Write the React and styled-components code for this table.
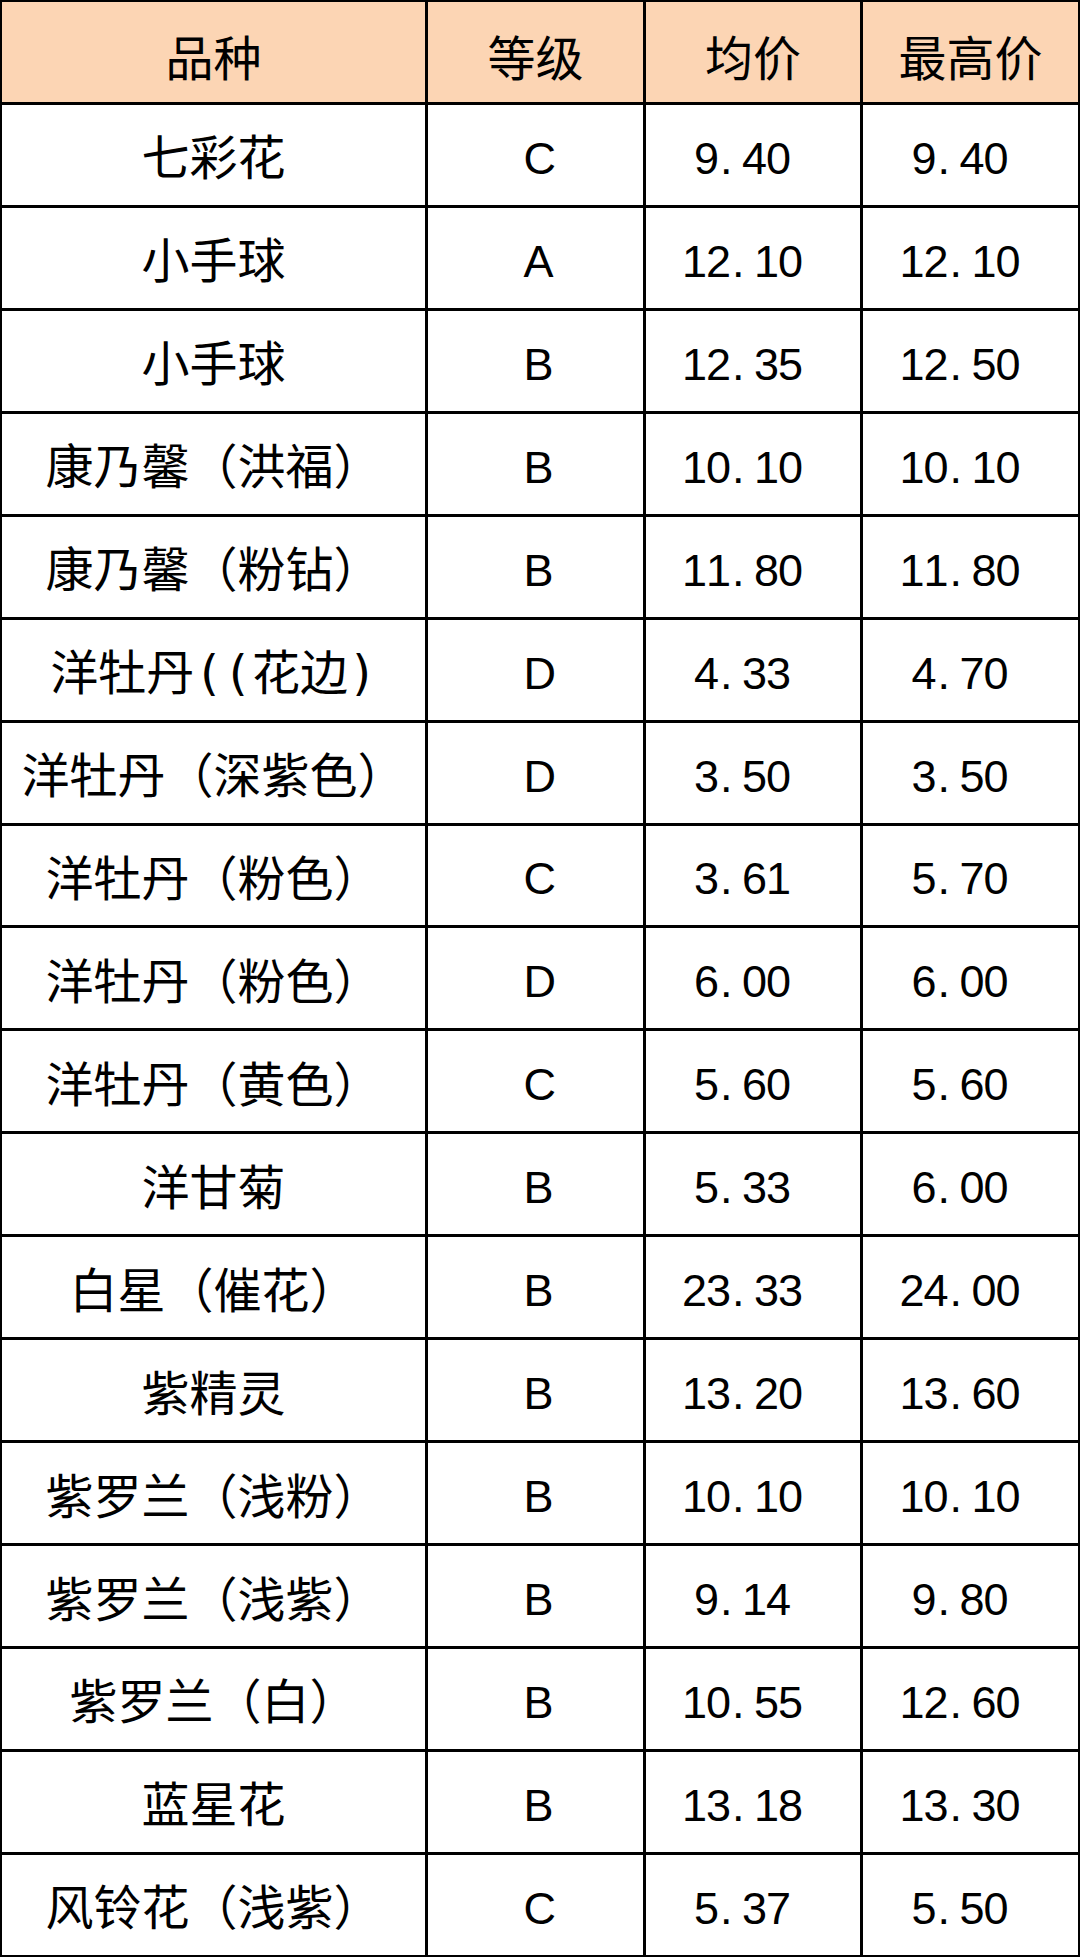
import React from "react";
import styled, { createGlobalStyle } from "styled-components";

const GlobalStyle = createGlobalStyle`
  html, body {
    margin: 0;
    padding: 0;
    background: #ffffff;
  }
  body {
    font-family: "Noto Sans CJK SC", sans-serif;
  }
`;

const Table = styled.div`
  display: grid;
  grid-template-columns: 423px 215px 214px 215px;
  grid-auto-rows: 99.95px;
  gap: 3px;
  padding: 2px;
  width: 1080px;
  box-sizing: border-box;
  background: #000000;
`;

const Cell = styled.div`
  display: flex;
  align-items: center;
  justify-content: center;
  padding-top: 7px;
  box-sizing: border-box;
  background: ${(p) => (p.$head ? "#FCD5B4" : "#ffffff")};
  color: #000000;
  white-space: nowrap;
  overflow: hidden;
`;

const NameText = styled.span`
  font-family: "DejaVu Sans Mono", "Noto Sans CJK SC", sans-serif;
  font-size: 48px;
  line-height: 1;
`;

const HeadText = styled.span`
  font-family: "Noto Sans CJK SC", sans-serif;
  font-size: 48px;
  line-height: 1;
`;

const ValueText = styled.span`
  display: inline-flex;
  padding-right: ${(p) => (p.$trail ? "22px" : "0")};
  font-family: "Liberation Sans", Arial, sans-serif;
  font-size: 45px;
  line-height: 1;
`;

const Glyph = styled.span`
  display: inline-block;
  width: 24px;
  text-align: ${(p) => (p.$dot ? "left" : "center")};
  padding-left: ${(p) => (p.$dot ? "2px" : "0")};
  box-sizing: border-box;
`;

const Value = ({ children, trail }) => (
  <ValueText $trail={trail}>
    {String(children)
      .split("")
      .map((ch, i) => (
        <Glyph key={i} $dot={ch === "."}>
          {ch}
        </Glyph>
      ))}
  </ValueText>
);

const headers = ["品种", "等级", "均价", "最高价"];

const rows = [
  ["七彩花", "C", "9.40", "9.40"],
  ["小手球", "A", "12.10", "12.10"],
  ["小手球", "B", "12.35", "12.50"],
  ["康乃馨（洪福）", "B", "10.10", "10.10"],
  ["康乃馨（粉钻）", "B", "11.80", "11.80"],
  ["洋牡丹((花边)", "D", "4.33", "4.70"],
  ["洋牡丹（深紫色）", "D", "3.50", "3.50"],
  ["洋牡丹（粉色）", "C", "3.61", "5.70"],
  ["洋牡丹（粉色）", "D", "6.00", "6.00"],
  ["洋牡丹（黄色）", "C", "5.60", "5.60"],
  ["洋甘菊", "B", "5.33", "6.00"],
  ["白星（催花）", "B", "23.33", "24.00"],
  ["紫精灵", "B", "13.20", "13.60"],
  ["紫罗兰（浅粉）", "B", "10.10", "10.10"],
  ["紫罗兰（浅紫）", "B", "9.14", "9.80"],
  ["紫罗兰（白）", "B", "10.55", "12.60"],
  ["蓝星花", "B", "13.18", "13.30"],
  ["风铃花（浅紫）", "C", "5.37", "5.50"],
];

export default function App() {
  return (
    <>
      <GlobalStyle />
      <Table>
        {headers.map((h) => (
          <Cell key={h} $head>
            <HeadText>{h}</HeadText>
          </Cell>
        ))}
        {rows.map((r, i) => (
          <React.Fragment key={i}>
            <Cell>
              <NameText>{r[0]}</NameText>
            </Cell>
            <Cell>
              <Value>{r[1]}</Value>
            </Cell>
            <Cell>
              <Value trail>{r[2]}</Value>
            </Cell>
            <Cell>
              <Value trail>{r[3]}</Value>
            </Cell>
          </React.Fragment>
        ))}
      </Table>
    </>
  );
}
